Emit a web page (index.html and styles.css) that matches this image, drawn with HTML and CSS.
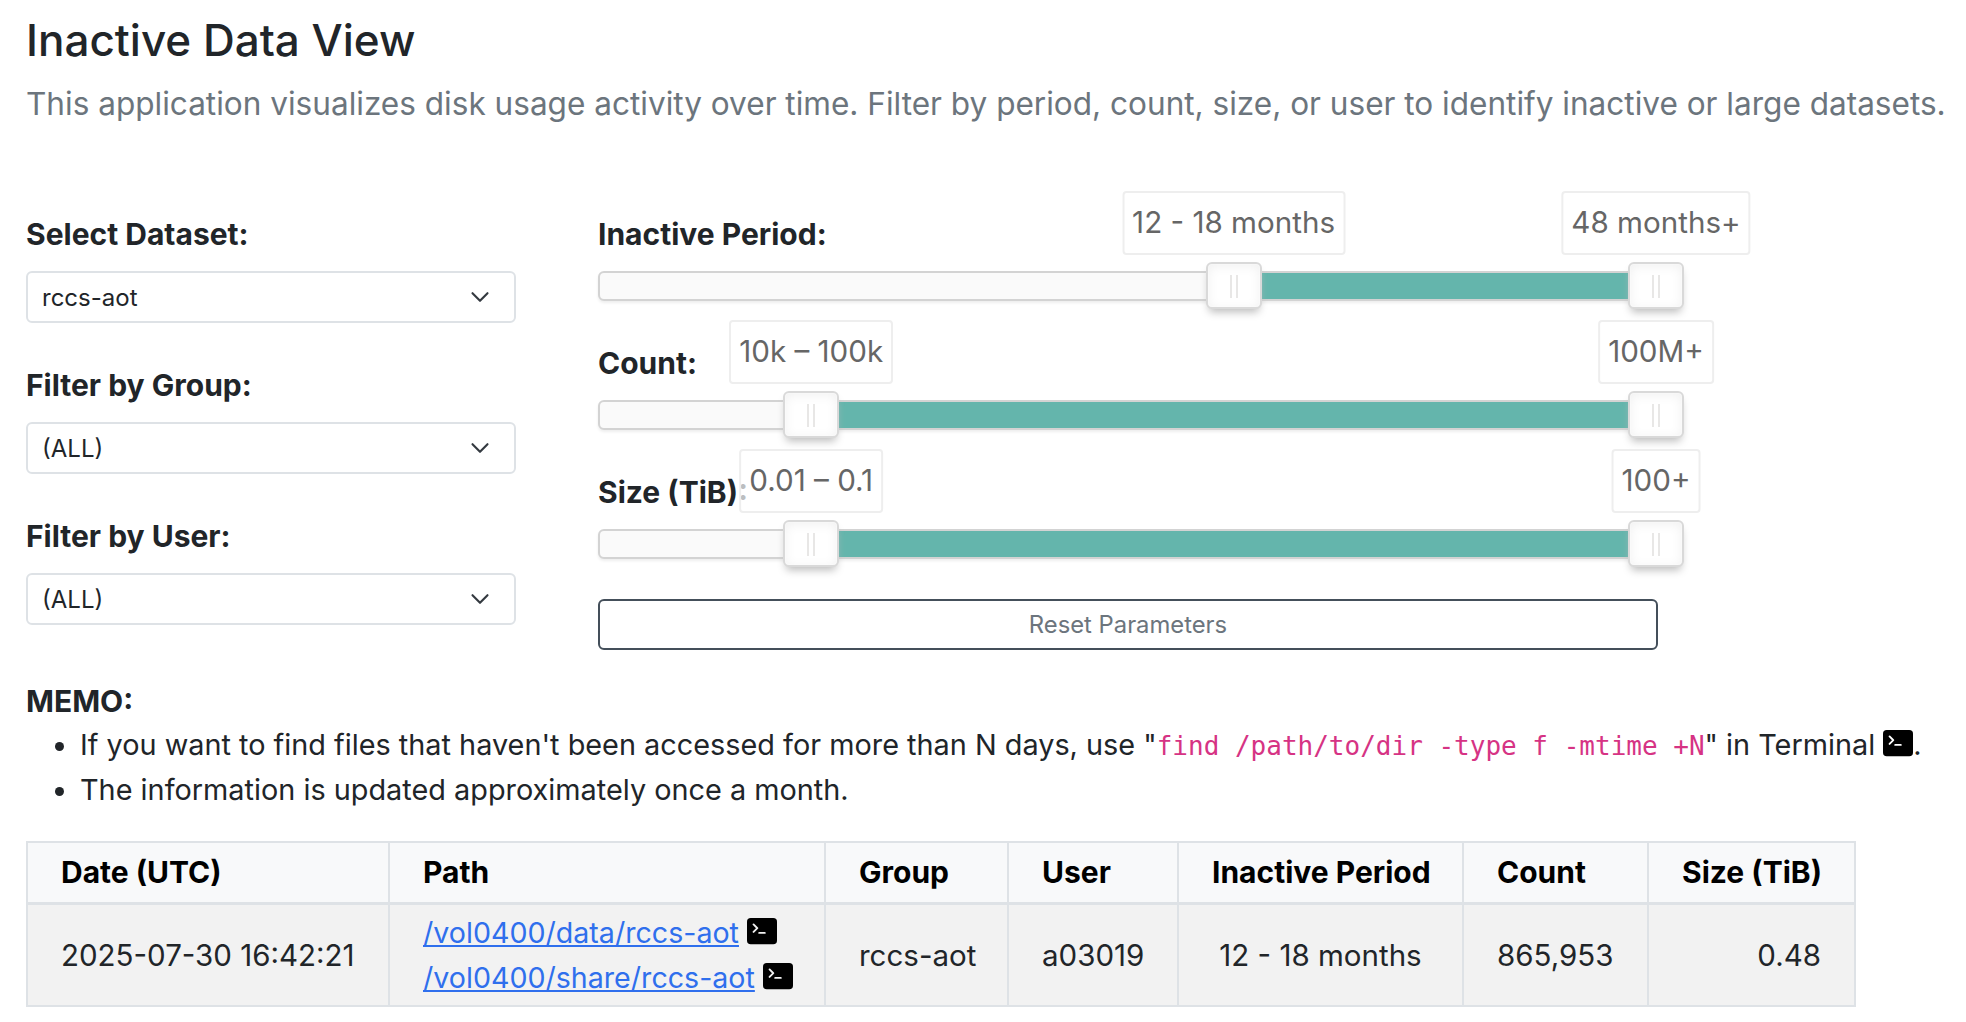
FILE: index.html
```html
<!DOCTYPE html>
<html lang="en">
<head>
    <meta charset="UTF-8">
    <title>Inactive Data View</title>
    <link rel="stylesheet" href="styles.css">
</head>
<body>
    <h1>Inactive Data View</h1>
    <p class="lead">This application visualizes disk usage activity over time. Filter by period, count, size, or user to identify inactive or large datasets.</p>

    <div class="controls">
        <div class="filters">
            <div class="filter">
                <label>Select Dataset:</label>
                <div class="select">
                    <span>rccs-aot</span>
                    <svg viewBox="0 0 16 16" width="20" height="20"><path d="M2 5l6 6 6-6" fill="none" stroke="#343a40" stroke-width="1.7" stroke-linecap="round" stroke-linejoin="round"/></svg>
                </div>
            </div>
            <div class="filter">
                <label>Filter by Group:</label>
                <div class="select">
                    <span>(ALL)</span>
                    <svg viewBox="0 0 16 16" width="20" height="20"><path d="M2 5l6 6 6-6" fill="none" stroke="#343a40" stroke-width="1.7" stroke-linecap="round" stroke-linejoin="round"/></svg>
                </div>
            </div>
            <div class="filter">
                <label>Filter by User:</label>
                <div class="select">
                    <span>(ALL)</span>
                    <svg viewBox="0 0 16 16" width="20" height="20"><path d="M2 5l6 6 6-6" fill="none" stroke="#343a40" stroke-width="1.7" stroke-linecap="round" stroke-linejoin="round"/></svg>
                </div>
            </div>
        </div>

        <div class="sliders">
            <div class="slider-row">
                <label>Inactive Period:</label>
                <div class="slider">
                    <div class="connect" style="left: 60%; right: 0;"></div>
                    <div class="handle" style="left: 60%;"><div class="tooltip">12 - 18 months</div></div>
                    <div class="handle" style="left: 100%;"><div class="tooltip">48 months+</div></div>
                </div>
            </div>
            <div class="slider-row">
                <label>Count:</label>
                <div class="slider">
                    <div class="connect" style="left: 20%; right: 0;"></div>
                    <div class="handle" style="left: 20%;"><div class="tooltip">10k – 100k</div></div>
                    <div class="handle" style="left: 100%;"><div class="tooltip">100M+</div></div>
                </div>
            </div>
            <div class="slider-row">
                <label>Size (TiB):</label>
                <div class="slider">
                    <div class="connect" style="left: 20%; right: 0;"></div>
                    <div class="handle" style="left: 20%;"><div class="tooltip">0.01 – 0.1</div></div>
                    <div class="handle" style="left: 100%;"><div class="tooltip">100+</div></div>
                </div>
            </div>
            <button class="reset">Reset Parameters</button>
        </div>
    </div>

    <div class="memo">
        <strong>MEMO:</strong>
        <ul>
            <li>If you want to find files that haven't been accessed for more than N days, use "<code>find /path/to/dir -type f -mtime +N</code>" in Terminal <svg class="term" viewBox="0 0 16 16"><path d="M0 3a2 2 0 0 1 2-2h12a2 2 0 0 1 2 2v10a2 2 0 0 1-2 2H2a2 2 0 0 1-2-2V3zm9.5 5.5h-3a.5.5 0 0 0 0 1h3a.5.5 0 0 0 0-1zm-6.354-.354a.5.5 0 1 0 .708.708l2-2a.5.5 0 0 0 0-.708l-2-2a.5.5 0 1 0-.708.708L4.793 6.5 3.146 8.146z"/></svg>.</li>
            <li>The information is updated approximately once a month.</li>
        </ul>
    </div>

    <table>
        <thead>
            <tr>
                <th class="c-date">Date (UTC)</th>
                <th class="c-path">Path</th>
                <th class="c-group">Group</th>
                <th class="c-user">User</th>
                <th class="c-period center">Inactive Period</th>
                <th class="c-count">Count</th>
                <th class="c-size">Size (TiB)</th>
            </tr>
        </thead>
        <tbody>
            <tr>
                <td>2025-07-30 16:42:21</td>
                <td class="paths">
                    <div><a href="#">/vol0400/data/rccs-aot</a> <svg class="term" viewBox="0 0 16 16"><path d="M0 3a2 2 0 0 1 2-2h12a2 2 0 0 1 2 2v10a2 2 0 0 1-2 2H2a2 2 0 0 1-2-2V3zm9.5 5.5h-3a.5.5 0 0 0 0 1h3a.5.5 0 0 0 0-1zm-6.354-.354a.5.5 0 1 0 .708.708l2-2a.5.5 0 0 0 0-.708l-2-2a.5.5 0 1 0-.708.708L4.793 6.5 3.146 8.146z"/></svg></div>
                    <div><a href="#">/vol0400/share/rccs-aot</a> <svg class="term" viewBox="0 0 16 16"><path d="M0 3a2 2 0 0 1 2-2h12a2 2 0 0 1 2 2v10a2 2 0 0 1-2 2H2a2 2 0 0 1-2-2V3zm9.5 5.5h-3a.5.5 0 0 0 0 1h3a.5.5 0 0 0 0-1zm-6.354-.354a.5.5 0 1 0 .708.708l2-2a.5.5 0 0 0 0-.708l-2-2a.5.5 0 1 0-.708.708L4.793 6.5 3.146 8.146z"/></svg></div>
                </td>
                <td>rccs-aot</td>
                <td>a03019</td>
                <td class="center">12 - 18 months</td>
                <td>865,953</td>
                <td class="right">0.48</td>
            </tr>
        </tbody>
    </table>
</body>
</html>
```

FILE: styles.css
```css
body {
    font-family: Inter, "Liberation Sans", sans-serif;
    font-size: 28.85px;
    line-height: 45px;
    margin: 0;
    padding: 0 26px;
    background-color: #fff;
    color: #212529;
}

h1 {
    font-size: 44px;
    font-weight: 500;
    line-height: 52px;
    margin: 14px 0 0;
}

.lead {
    font-size: 31.55px;
    line-height: 46px;
    color: #6c757d;
    margin: 15px 0 0;
    white-space: nowrap;
}

label {
    display: block;
    font-size: 30px;
    font-weight: 700;
}

.controls {
    display: flex;
    margin-top: 85px;
}

.filters {
    width: 490px;
    margin-right: 82px;
}

.filter {
    height: 151px;
}

.filter label {
    height: 59px;
}

.select {
    height: 52px;
    box-sizing: border-box;
    border: 2px solid #dee2e6;
    border-radius: 6px;
    padding: 0 24px 0 14px;
    display: flex;
    justify-content: space-between;
    align-items: center;
    font-size: 24px;
}

.sliders {
    width: 1060px;
}

.slider-row {
    height: 99px;
    margin-bottom: 30px;
}

.slider-row label {
    height: 59px;
    white-space: nowrap;
}

.slider {
    position: relative;
    height: 30px;
    box-sizing: border-box;
    background: #fafafa;
    border: 2px solid #d3d3d3;
    border-radius: 6px;
    box-shadow: 0 2px 3px #eee;
}

.connect {
    position: absolute;
    top: 0;
    bottom: 0;
    background: #64b5ac;
}

.handle {
    position: absolute;
    top: -11px;
    width: 56px;
    height: 47px;
    margin-left: -28px;
    box-sizing: border-box;
    background: #fff;
    border: 2px solid #d9d9d9;
    border-radius: 6px;
    box-shadow: inset 0 0 2px #fff, inset 0 2px 12px #f0f0f0, 0 6px 8px -3px #bbb;
}

.handle::before,
.handle::after {
    content: "";
    position: absolute;
    top: 11px;
    width: 2px;
    height: 23px;
    background: #e8e7e6;
}

.handle::before {
    left: 22px;
}

.handle::after {
    left: 28px;
}

.tooltip {
    position: absolute;
    bottom: 100%;
    left: 50%;
    transform: translateX(-50%);
    margin-bottom: 9px;
    height: 64px;
    box-sizing: border-box;
    border: 2px solid #eeeeee;
    border-radius: 4px;
    background: rgba(255, 255, 255, 0.7);
    padding: 0 8px;
    font-size: 29.6px;
    color: #666;
    line-height: 58px;
    white-space: nowrap;
}

.reset {
    display: block;
    width: 100%;
    height: 51px;
    background: #fff;
    color: #6c757d;
    border: 2px solid #444f5a;
    border-radius: 6px;
    font-family: inherit;
    font-size: 23.8px;
}

.memo {
    margin-top: 14px;
}

.memo strong {
    font-size: 30px;
    font-weight: 700;
}

ul {
    margin: -2px 0 0;
    padding-left: 54px;
}

code {
    font-family: "DejaVu Sans Mono", monospace;
    font-size: 26px;
    line-height: 1;
    color: #d63384;
}

.term {
    width: 30px;
    height: 30px;
    vertical-align: -3px;
}

table {
    border-collapse: collapse;
    table-layout: fixed;
    width: 1828px;
    margin-top: 29px;
}

th, td {
    border: 2px solid #dee2e6;
    padding: 5px 33px;
    text-align: left;
    box-sizing: border-box;
    white-space: nowrap;
}

th {
    font-size: 30px;
    font-weight: 700;
    color: #000;
    background: #f8f9fa;
    padding-top: 7px;
    padding-bottom: 7px;
    border-bottom-width: 3px;
}

td {
    font-size: 29.5px;
    background: #f2f2f2;
}

td.paths {
    font-size: 28.6px;
}

td a {
    color: #2f6fed;
}

.c-date { width: 362px; }
.c-path { width: 436px; }
.c-group { width: 183px; }
.c-user { width: 170px; }
.c-period { width: 285px; }
.c-count { width: 185px; }
.c-size { width: 207px; }

.center { text-align: center; }
.right { text-align: right; }
```
